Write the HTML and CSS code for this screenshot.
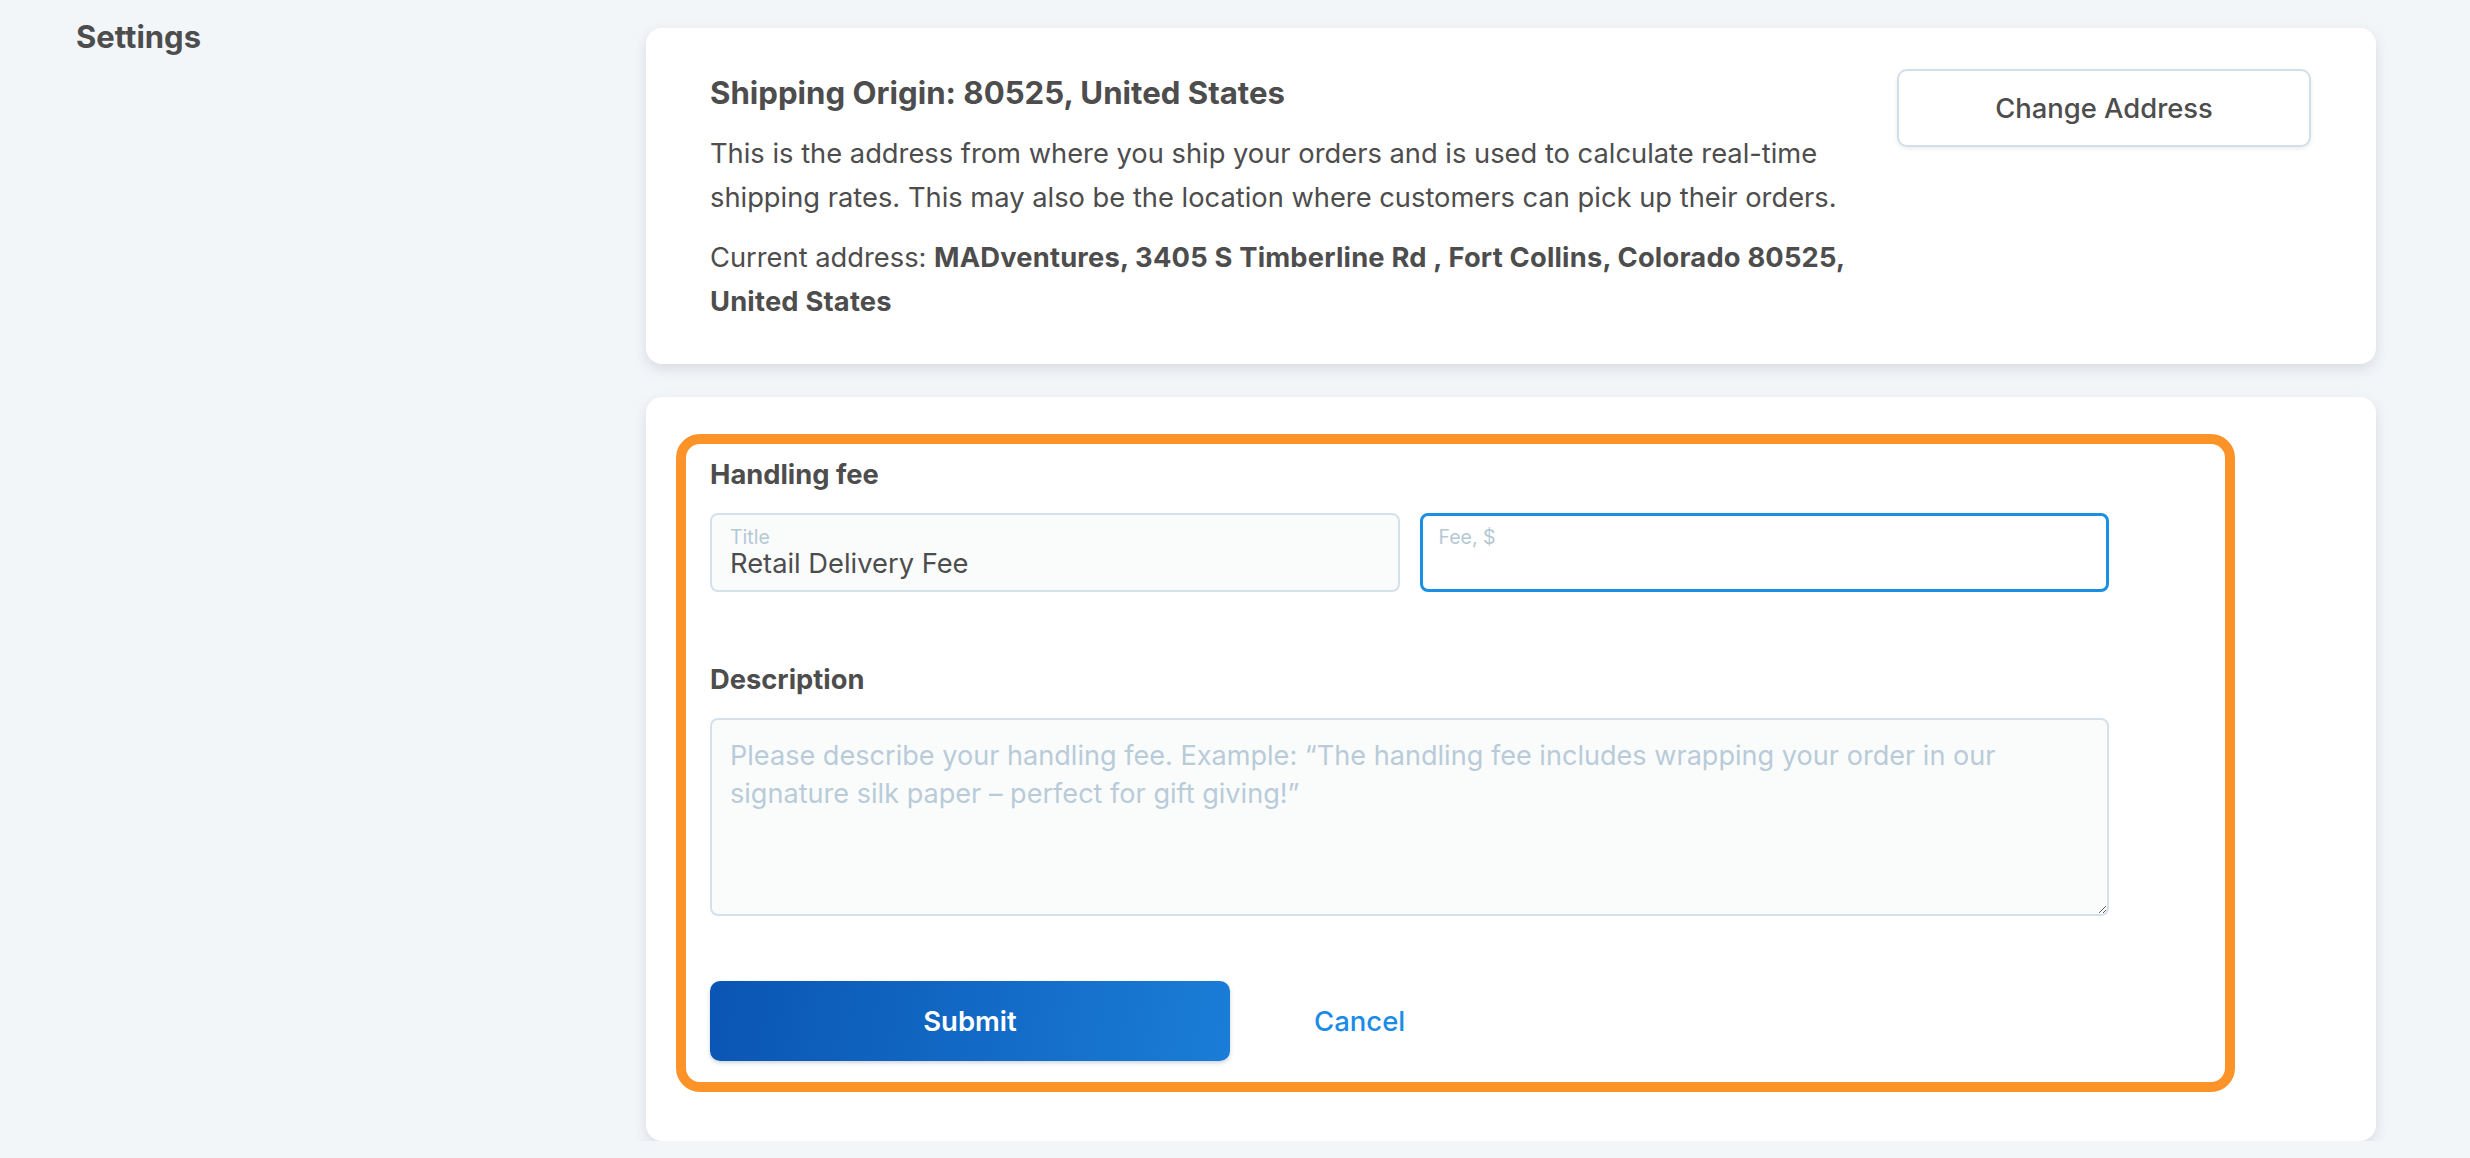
FILE: index.html
```html
<!DOCTYPE html>
<html lang="en">
<head>
<meta charset="utf-8">
<title>Settings</title>
<link rel="stylesheet" href="styles.css">
</head>
<body>
<div class="page">
  <h1 class="page-title">Settings</h1>
  <main class="content">
    <section class="card origin-card">
      <div class="origin-text">
        <h2 class="card-heading">Shipping Origin: 80525, United States</h2>
        <p class="para">This is the address from where you ship your orders and is used to calculate real-time shipping rates. This may also be the location where customers can pick up their orders.</p>
        <p class="para address"><span class="addr-label">Current address: </span><strong class="addr-value">MADventures, 3405 S Timberline Rd , Fort Collins, Colorado 80525, United States</strong></p>
      </div>
      <button class="btn-outline" type="button">Change Address</button>
    </section>

    <section class="card fee-card">
      <form class="fee-form">
        <h3 class="form-label">Handling fee</h3>
        <div class="field-row">
          <label class="field">
            <span class="field-label">Title</span>
            <input class="field-input" type="text" value="Retail Delivery Fee">
          </label>
          <label class="field field-focus">
            <span class="field-label">Fee, $</span>
            <input class="field-input" type="text" value="">
          </label>
        </div>
        <h3 class="form-label desc-label">Description</h3>
        <textarea class="desc-area" placeholder="Please describe your handling fee. Example: “The handling fee includes wrapping your order in our signature silk paper – perfect for gift giving!”"></textarea>
        <div class="actions">
          <button class="btn-primary" type="button">Submit</button>
          <button class="btn-link" type="button">Cancel</button>
        </div>
      </form>
    </section>
  </main>
</div>
</body>
</html>
```

FILE: styles.css
```css
* { box-sizing: border-box; }

html, body {
  margin: 0;
  padding: 0;
  background: #f3f6f9;
  font-family: Inter, "Liberation Sans", sans-serif;
  color: #4d4d4d;
}

.page {
  display: grid;
  grid-template-columns: 570px 1730px;
  padding: 19px 0 0 76px;
}

.page-title {
  margin: 0;
  font-size: 31px;
  line-height: 36px;
  font-weight: 700;
  color: #4d4d4d;
}

.content {
  display: flex;
  flex-direction: column;
  gap: 33px;
  padding-top: 9px;
}

.card {
  background: #ffffff;
  border-radius: 16px;
  box-shadow: 0 5px 13px rgba(30, 40, 55, 0.13);
}

.origin-card {
  display: flex;
  align-items: flex-start;
  gap: 30px;
  padding: 41px 65px 40px 64px;
}

.origin-text {
  flex: 1;
}

.card-heading {
  margin: 6px 0 0;
  font-size: 31.2px;
  line-height: 36px;
  font-weight: 700;
}

.para {
  margin: 21px 0 0;
  font-size: 27.3px;
  line-height: 44px;
}

.para.address {
  margin-top: 16px;
}

.addr-value {
  font-weight: 700;
  letter-spacing: 0.2px;
}

.btn-outline {
  flex: none;
  width: 414px;
  height: 78px;
  background: #ffffff;
  border: 2px solid #d3dfe8;
  border-radius: 10px;
  box-shadow: 0 2px 4px rgba(20, 40, 60, 0.08);
  font-family: inherit;
  font-size: 27.4px;
  font-weight: 500;
  color: #4d4d4d;
}

.fee-card {
  padding: 37px 141px 49px 30px;
}

.fee-form {
  border: 10px solid #fc9328;
  border-radius: 24px;
  padding: 13px 24px 21px 24px;
}

.form-label {
  margin: 0;
  font-size: 27.3px;
  line-height: 36px;
  font-weight: 700;
}

.field-row {
  display: grid;
  grid-template-columns: 1fr 1fr;
  gap: 20px;
  width: 1399px;
  margin-top: 20px;
}

.field {
  display: flex;
  flex-direction: column;
  height: 79px;
  padding: 11px 18px 0;
  background: #fafcfc;
  border: 2px solid #d5e1ea;
  border-radius: 8px;
}

.field-focus {
  background: #ffffff;
  border: 3px solid #1a8fe3;
  padding: 10px 16px 0;
}

.field-label {
  font-size: 19.5px;
  line-height: 22px;
  color: #b5c8d6;
}

.field-input {
  border: 0;
  outline: none;
  padding: 0;
  margin: 0;
  background: transparent;
  font-family: inherit;
  font-size: 27.3px;
  line-height: 32px;
  height: 32px;
  color: #4d4d4d;
}

.desc-label {
  margin-top: 70px;
}

.desc-area {
  display: block;
  width: 1399px;
  height: 198px;
  margin-top: 20px;
  padding: 17px 18px;
  background: #fafcfc;
  border: 2px solid #d5e1ea;
  border-radius: 8px;
  font-family: inherit;
  font-size: 27.1px;
  line-height: 38px;
  color: #4d4d4d;
  outline: none;
}

.desc-area::placeholder {
  color: #b9cbd8;
}

.actions {
  display: flex;
  align-items: center;
  gap: 84px;
  margin-top: 65px;
}

.btn-primary {
  width: 520px;
  height: 80px;
  border: 0;
  border-radius: 10px;
  background: linear-gradient(100deg, #0a55b3 0%, #1a7dd7 100%);
  box-shadow: 0 2px 4px rgba(10, 40, 90, 0.2);
  font-family: inherit;
  font-size: 27.5px;
  font-weight: 600;
  color: #ffffff;
}

.btn-link {
  border: 0;
  background: none;
  padding: 0;
  font-family: inherit;
  font-size: 27.5px;
  font-weight: 500;
  color: #1a8ce8;
}
```
